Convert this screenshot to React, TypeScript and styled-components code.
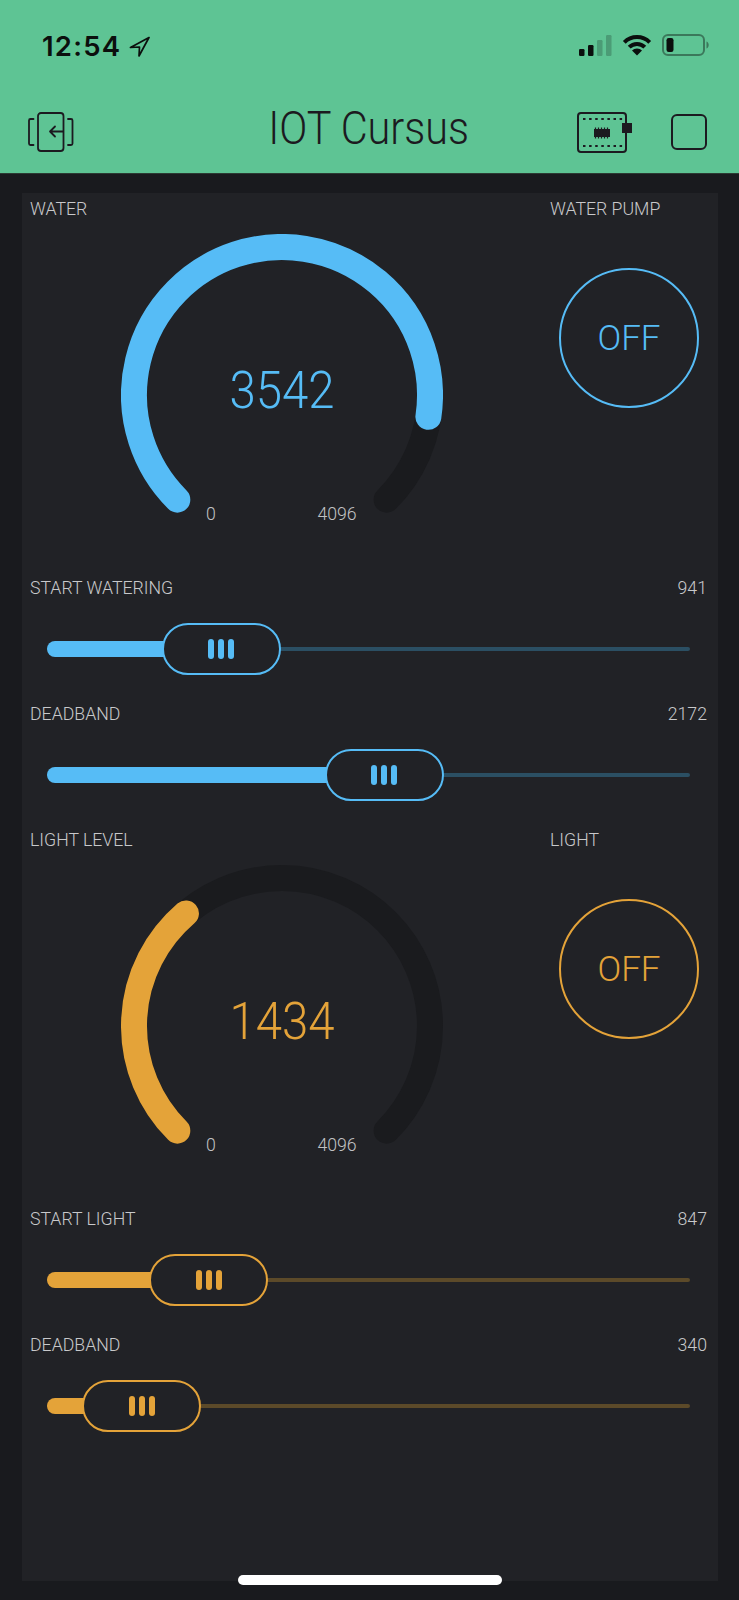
import React from 'react';
import styled, { createGlobalStyle } from 'styled-components';

const BLUE = '#56bcf6';
const ORANGE = '#e4a339';
const GAUGE_MAX = 4096;

const GlobalStyle = createGlobalStyle`
  html, body {
    margin: 0;
    padding: 0;
    background: #191a1e;
  }
  * {
    box-sizing: border-box;
  }
`;

const Screen = styled.div`
  position: relative;
  width: 739px;
  height: 1600px;
  background: #191a1e;
  font-family: Roboto, "Liberation Sans", sans-serif;
  overflow: hidden;
`;

const Header = styled.header`
  height: 174px;
  background: #5ec494;
  border-bottom: 1px solid #2c3a33;
  color: #1c1a20;
`;

const StatusBar = styled.div`
  height: 98px;
  padding: 30px 30px 0 42px;
  display: flex;
  justify-content: space-between;
  align-items: flex-start;
`;

const TimeGroup = styled.div`
  display: flex;
  align-items: center;
  gap: 8px;
`;

const Time = styled.span`
  font-family: Inter, sans-serif;
  font-weight: 600;
  font-size: 27.5px;
  letter-spacing: 1.2px;
  line-height: 32px;
  color: #0b0f0d;
`;

const StatusIcons = styled.div`
  display: flex;
  align-items: center;
  gap: 10px;
  margin-top: 4px;
`;

const NavBar = styled.div`
  display: grid;
  grid-template-columns: 1fr auto 1fr;
  align-items: center;
  height: 60px;
  padding: 0 32px 0 28px;
`;

const Title = styled.h1`
  margin: 0 0 8px;
  font-weight: 300;
  font-size: 46px;
  line-height: 60px;
  color: #1c1a20;
  transform: translateX(1px) scaleX(0.9);
  white-space: nowrap;
`;

const NavRight = styled.div`
  display: flex;
  justify-content: flex-end;
  align-items: center;
  gap: 38px;
`;

const Panel = styled.main`
  margin: 19px 21px 0 22px;
  height: 1388px;
  background: #212226;
`;

const Section = styled.section`
  height: 631px;
`;

const GaugeRow = styled.div`
  height: 379px;
  display: grid;
  grid-template-columns: 520px 1fr;
`;

const Label = styled.div`
  font-size: 17.7px;
  font-weight: 300;
  line-height: 32px;
  color: #c8c9cb;
  white-space: nowrap;
`;

const GaugeWidget = styled.div`
  padding-left: 8px;
`;

const Dial = styled.div`
  position: relative;
  width: 322px;
  height: 300px;
  margin: 9px 0 0 91px;
`;

const DialValue = styled.div<{ $color: string }>`
  position: absolute;
  left: 0;
  right: 0;
  top: 127px;
  text-align: center;
  font-weight: 300;
  font-size: 52px;
  line-height: 60px;
  color: ${(p) => p.$color};
  transform: scaleX(0.91);
`;

const DialBound = styled.span<{ $x: number }>`
  position: absolute;
  top: 267px;
  left: ${(p) => p.$x}px;
  transform: translateX(-50%);
  font-size: 17.7px;
  font-weight: 300;
  line-height: 26px;
  color: #c0c1c3;
`;

const ButtonWidget = styled.div`
  padding-left: 8px;
`;

const RoundButton = styled.button<{ $color: string }>`
  display: block;
  width: 140px;
  height: 140px;
  margin: 43px 0 0 9px;
  padding: 0;
  border-radius: 50%;
  border: 2px solid ${(p) => p.$color};
  background: transparent;
  color: ${(p) => p.$color};
  font-family: inherit;
  font-weight: 300;
  font-size: 35px;
`;

const SliderWidget = styled.div`
  height: 126px;
`;

const SliderHead = styled.div`
  display: flex;
  justify-content: space-between;
  padding: 0 11px 0 8px;
`;

const SliderBody = styled.div`
  position: relative;
  height: 52px;
  margin: 19px 28px 0 25px;
`;

const Rail = styled.div<{ $color: string }>`
  position: absolute;
  left: 0;
  right: 0;
  top: 24px;
  height: 4px;
  border-radius: 2px;
  background: ${(p) => p.$color};
`;

const Fill = styled.div<{ $color: string }>`
  position: absolute;
  left: 0;
  top: 18px;
  height: 16px;
  border-radius: 8px;
  background: ${(p) => p.$color};
`;

const Thumb = styled.div<{ $color: string }>`
  position: absolute;
  top: 0;
  width: 119px;
  height: 52px;
  border: 2px solid ${(p) => p.$color};
  border-radius: 26px;
  background: #212226;
  display: flex;
  justify-content: center;
  align-items: center;
  gap: 4px;
`;

const Grip = styled.span<{ $color: string }>`
  width: 6px;
  height: 20px;
  border-radius: 3px;
  background: ${(p) => p.$color};
`;

const HomeBar = styled.div`
  position: absolute;
  left: 238px;
  top: 1575px;
  width: 264px;
  height: 10px;
  border-radius: 5px;
  background: #ffffff;
`;

const LocationIcon = () => (
  <svg width="21" height="21" viewBox="0 0 21 21">
    <path d="M20 1.500 1.500 11.500 10.500 11 10 20Z" fill="none" stroke="#0b0f0d" strokeWidth="1.700" strokeLinejoin="round" />
  </svg>
);

const SignalIcon = () => (
  <svg width="33" height="21" viewBox="0 0 33 21" fill="#0b0f0d">
    <rect x="0" y="14" width="5.500" height="7" rx="1.200" />
    <rect x="9" y="10" width="5.500" height="11" rx="1.200" />
    <rect x="18" y="5" width="5.500" height="16" rx="1.200" opacity="0.22" />
    <rect x="27" y="0" width="5.500" height="21" rx="1.200" opacity="0.22" />
  </svg>
);

const WifiIcon = () => (
  <svg width="30" height="22" viewBox="0 0 30 22" fill="none" stroke="#0b0f0d" strokeWidth="4">
    <path d="M2.300 8.300a18 18 0 0 1 25.400 0" />
    <path d="M7.200 13.200a11 11 0 0 1 15.600 0" />
    <path d="M10 16.500 15 21.500 20 16.500a7 7 0 0 0-10 0Z" fill="#0b0f0d" stroke="none" />
  </svg>
);

const BatteryIcon = () => (
  <svg width="47" height="22" viewBox="0 0 47 22">
    <rect x="1" y="1" width="41" height="20" rx="5" fill="none" stroke="#0b0f0d" strokeWidth="2" opacity="0.42" />
    <rect x="4.500" y="4" width="7" height="14" rx="2.200" fill="#0b0f0d" />
    <path d="M44.500 7.500c1.500.6 2.200 2 2.200 3.500s-.7 2.900-2.200 3.500Z" fill="#0b0f0d" opacity="0.42" />
  </svg>
);

const ProjectIcon = () => (
  <svg width="46" height="40" viewBox="0 0 46 40" fill="none" stroke="#1c1a20" strokeWidth="1.800" strokeLinecap="round" strokeLinejoin="round">
    <rect x="10" y="1" width="25.500" height="38" rx="3" />
    <path d="M5.500 7H2.500A1.500 1.500 0 0 0 1 8.500v23A1.500 1.500 0 0 0 2.500 33h3" />
    <path d="M40 7h3a1.500 1.500 0 0 1 1.500 1.500v23a1.500 1.500 0 0 1-1.500 1.500h-3" />
    <path d="M35 19.500H22M27 14.500l-5 5 5 5" />
  </svg>
);

const BoardIcon = () => (
  <svg width="56" height="41" viewBox="0 0 56 41" fill="none" stroke="#1c1a20">
    <rect x="1" y="1" width="48" height="39" rx="3" strokeWidth="2" />
    <path d="M6 7h40M6 34h40" strokeWidth="2" strokeDasharray="2.500 3.600" />
    <rect x="17" y="17" width="16" height="8" fill="#1c1a20" stroke="none" />
    <path d="M18.500 15.500v11M21.500 15.500v11M24.500 15.500v11M27.500 15.500v11M30.500 15.500v11" strokeWidth="1.200" />
    <rect x="45" y="11" width="10" height="10" fill="#1c1a20" stroke="none" />
  </svg>
);

const SquareIcon = () => (
  <svg width="36" height="36" viewBox="0 0 36 36" fill="none" stroke="#1c1a20" strokeWidth="2">
    <rect x="1" y="1" width="34" height="34" rx="5" />
  </svg>
);

const polar = (angle: number) => {
  const r = 148;
  const rad = (angle * Math.PI) / 180;
  return { x: 161 + r * Math.sin(rad), y: 161 - r * Math.cos(rad) };
};

const arcPath = (from: number, to: number) => {
  const a = polar(from);
  const b = polar(to);
  const large = to - from > 180 ? 1 : 0;
  return `M${a.x} ${a.y}A148 148 0 ${large} 1 ${b.x} ${b.y}`;
};

type GaugeProps = { label: string; value: number; color: string };

const Gauge = ({ label, value, color }: GaugeProps) => {
  const end = -135 + (value / GAUGE_MAX) * 270;
  return (
    <GaugeWidget>
      <Label>{label}</Label>
      <Dial>
        <svg width="322" height="300" viewBox="0 0 322 300" fill="none" strokeWidth="26" strokeLinecap="round">
          <path d={arcPath(-135, 135)} stroke="#1a1b1e" />
          <path d={arcPath(-135, end)} stroke={color} />
        </svg>
        <DialValue $color={color}>{value}</DialValue>
        <DialBound $x={90}>0</DialBound>
        <DialBound $x={216}>{GAUGE_MAX}</DialBound>
      </Dial>
    </GaugeWidget>
  );
};

type SliderProps = { label: string; value: number; color: string; rail: string };

const Slider = ({ label, value, color, rail }: SliderProps) => {
  const left = (value / GAUGE_MAX) * 543 - 10;
  return (
    <SliderWidget>
      <SliderHead>
        <Label>{label}</Label>
        <Label>{value}</Label>
      </SliderHead>
      <SliderBody>
        <Rail $color={rail} />
        <Fill $color={color} style={{ width: left + 20 }} />
        <Thumb $color={color} style={{ left }}>
          <Grip $color={color} />
          <Grip $color={color} />
          <Grip $color={color} />
        </Thumb>
      </SliderBody>
    </SliderWidget>
  );
};

export default function App() {
  return (
    <Screen>
      <GlobalStyle />
      <Header>
        <StatusBar>
          <TimeGroup>
            <Time>12:54</Time>
            <LocationIcon />
          </TimeGroup>
          <StatusIcons>
            <SignalIcon />
            <WifiIcon />
            <BatteryIcon />
          </StatusIcons>
        </StatusBar>
        <NavBar>
          <ProjectIcon />
          <Title>IOT Cursus</Title>
          <NavRight>
            <BoardIcon />
            <SquareIcon />
          </NavRight>
        </NavBar>
      </Header>
      <Panel>
        <Section>
          <GaugeRow>
            <Gauge label="WATER" value={3542} color={BLUE} />
            <ButtonWidget>
              <Label>WATER PUMP</Label>
              <RoundButton $color={BLUE}>OFF</RoundButton>
            </ButtonWidget>
          </GaugeRow>
          <Slider label="START WATERING" value={941} color={BLUE} rail="#2b4f63" />
          <Slider label="DEADBAND" value={2172} color={BLUE} rail="#2b4f63" />
        </Section>
        <Section>
          <GaugeRow>
            <Gauge label="LIGHT LEVEL" value={1434} color={ORANGE} />
            <ButtonWidget>
              <Label>LIGHT</Label>
              <RoundButton $color={ORANGE}>OFF</RoundButton>
            </ButtonWidget>
          </GaugeRow>
          <Slider label="START LIGHT" value={847} color={ORANGE} rail="#5c4a29" />
          <Slider label="DEADBAND" value={340} color={ORANGE} rail="#5c4a29" />
        </Section>
      </Panel>
      <HomeBar />
    </Screen>
  );
}
